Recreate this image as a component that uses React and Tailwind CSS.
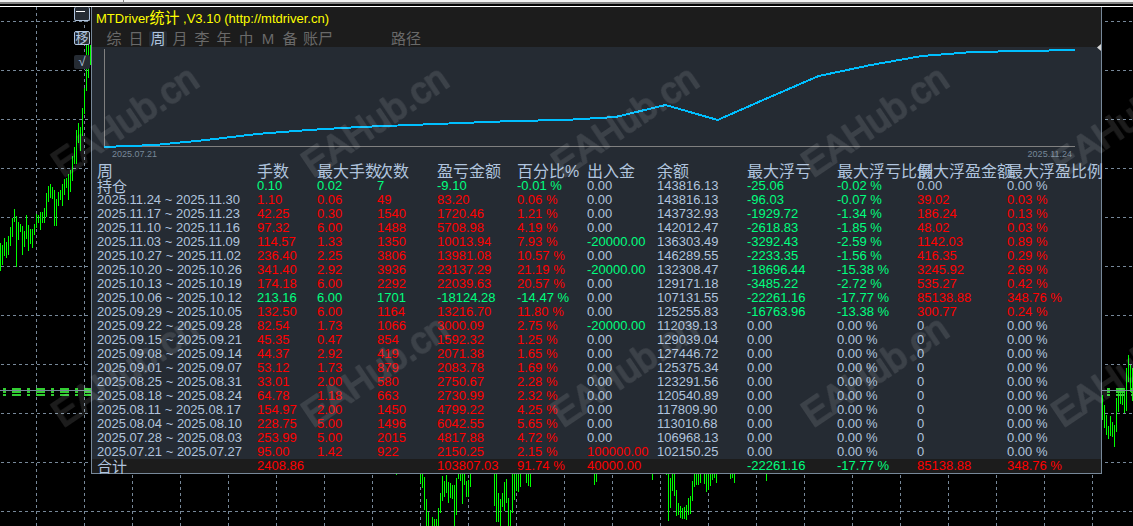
const TABS = ['综', '日', '周', '月', '李', '年', '巾', 'M', '备', '账尸']

const COLUMNS = [
  { label: '周',           width: 'w-[165px]' },
  { label: '手数',         width: 'w-[60px]' },
  { label: '最大手数',     width: 'w-[60px]' },
  { label: '次数',         width: 'w-[60px]' },
  { label: '盈亏金额',     width: 'w-[80px]' },
  { label: '百分比%',      width: 'w-[70px]' },
  { label: '出入金',       width: 'w-[70px]' },
  { label: '余额',         width: 'w-[90px]' },
  { label: '最大浮亏',     width: 'w-[90px]' },
  { label: '最大浮亏比例', width: 'w-[80px]' },
  { label: '最大浮盈金额', width: 'w-[90px]' },
  { label: '最大浮盈比例', width: '' },
]

// period, lots, max lots, trades, profit, %, deposit, balance, max loss, %, max gain, %
const ROWS = [
  ['持仓', '0.10', '0.02', '7', '-9.10', '-0.01 %', '0.00', '143816.13', '-25.06', '-0.02 %', '0.00', '0.00 %'],
  ['2025.11.24 ~ 2025.11.30', '1.10', '0.06', '49', '83.20', '0.06 %', '0.00', '143816.13', '-96.03', '-0.07 %', '39.02', '0.03 %'],
  ['2025.11.17 ~ 2025.11.23', '42.25', '0.30', '1540', '1720.46', '1.21 %', '0.00', '143732.93', '-1929.72', '-1.34 %', '186.24', '0.13 %'],
  ['2025.11.10 ~ 2025.11.16', '97.32', '6.00', '1488', '5708.98', '4.19 %', '0.00', '142012.47', '-2618.83', '-1.85 %', '48.02', '0.03 %'],
  ['2025.11.03 ~ 2025.11.09', '114.57', '1.33', '1350', '10013.94', '7.93 %', '-20000.00', '136303.49', '-3292.43', '-2.59 %', '1142.03', '0.89 %'],
  ['2025.10.27 ~ 2025.11.02', '236.40', '2.25', '3806', '13981.08', '10.57 %', '0.00', '146289.55', '-2233.35', '-1.56 %', '416.35', '0.29 %'],
  ['2025.10.20 ~ 2025.10.26', '341.40', '2.92', '3936', '23137.29', '21.19 %', '-20000.00', '132308.47', '-18696.44', '-15.38 %', '3245.92', '2.69 %'],
  ['2025.10.13 ~ 2025.10.19', '174.18', '6.00', '2292', '22039.63', '20.57 %', '0.00', '129171.18', '-3485.22', '-2.72 %', '535.27', '0.42 %'],
  ['2025.10.06 ~ 2025.10.12', '213.16', '6.00', '1701', '-18124.28', '-14.47 %', '0.00', '107131.55', '-22261.16', '-17.77 %', '85138.88', '348.76 %'],
  ['2025.09.29 ~ 2025.10.05', '132.50', '6.00', '1164', '13216.70', '11.80 %', '0.00', '125255.83', '-16763.96', '-13.38 %', '300.77', '0.24 %'],
  ['2025.09.22 ~ 2025.09.28', '82.54', '1.73', '1066', '3000.09', '2.75 %', '-20000.00', '112039.13', '0.00', '0.00 %', '0', '0.00 %'],
  ['2025.09.15 ~ 2025.09.21', '45.35', '0.47', '854', '1592.32', '1.25 %', '0.00', '129039.04', '0.00', '0.00 %', '0', '0.00 %'],
  ['2025.09.08 ~ 2025.09.14', '44.37', '2.92', '419', '2071.38', '1.65 %', '0.00', '127446.72', '0.00', '0.00 %', '0', '0.00 %'],
  ['2025.09.01 ~ 2025.09.07', '53.12', '1.73', '879', '2083.78', '1.69 %', '0.00', '125375.34', '0.00', '0.00 %', '0', '0.00 %'],
  ['2025.08.25 ~ 2025.08.31', '33.01', '2.00', '580', '2750.67', '2.28 %', '0.00', '123291.56', '0.00', '0.00 %', '0', '0.00 %'],
  ['2025.08.18 ~ 2025.08.24', '64.78', '1.18', '663', '2730.99', '2.32 %', '0.00', '120540.89', '0.00', '0.00 %', '0', '0.00 %'],
  ['2025.08.11 ~ 2025.08.17', '154.97', '2.00', '1450', '4799.22', '4.25 %', '0.00', '117809.90', '0.00', '0.00 %', '0', '0.00 %'],
  ['2025.08.04 ~ 2025.08.10', '228.75', '5.00', '1496', '6042.55', '5.65 %', '0.00', '113010.68', '0.00', '0.00 %', '0', '0.00 %'],
  ['2025.07.28 ~ 2025.08.03', '253.99', '5.00', '2015', '4817.88', '4.72 %', '0.00', '106968.13', '0.00', '0.00 %', '0', '0.00 %'],
  ['2025.07.21 ~ 2025.07.27', '95.00', '1.42', '922', '2150.25', '2.15 %', '100000.00', '102150.25', '0.00', '0.00 %', '0', '0.00 %'],
]

const TOTAL = ['合计', '2408.86', '', '', '103807.03', '91.74 %', '40000.00', '', '-22261.16', '-17.77 %', '85138.88', '348.76 %']

const EQUITY = '0,100 51,98 102,93 153,87 204,83 255,80 306,78 357,76 408,74 460,73 511,70 561,58 613,73 663,51 714,29 766,18 817,9 868,5 919,4 970,3'

// price bars of the chart behind the panel: x, high, low
const BARS = [
  [0, 243, 271], [2, 245, 265], [4, 238, 256], [6, 242, 258], [8, 236, 255], [10, 227, 246], [12, 218, 237],
  [14, 209, 222], [16, 216, 267], [18, 222, 240], [20, 224, 232], [22, 226, 255], [24, 231, 247], [26, 215, 239],
  [28, 225, 251], [30, 229, 244], [32, 229, 248], [34, 224, 235], [36, 214, 228], [38, 215, 223], [40, 212, 230],
  [42, 212, 223], [44, 208, 223], [46, 193, 217], [48, 186, 202], [50, 184, 198], [52, 187, 199], [54, 190, 226],
  [56, 199, 226], [58, 192, 206], [60, 190, 200], [62, 184, 206], [64, 179, 195], [66, 178, 188], [68, 174, 200],
  [70, 170, 192], [72, 156, 181], [74, 147, 164], [76, 130, 164], [78, 123, 143], [80, 127, 151], [82, 108, 136],
  [84, 88, 114], [86, 45, 91], [88, 45, 78], [90, 45, 65],
  [396, 473, 475], [412, 473, 474], [420, 473, 483], [422, 473, 488], [424, 477, 510], [426, 499, 526],
  [428, 512, 526], [432, 517, 526], [434, 519, 526], [436, 519, 526], [438, 508, 526], [440, 493, 513],
  [442, 476, 501], [444, 481, 497], [446, 475, 493], [448, 482, 503], [450, 483, 498], [452, 485, 499],
  [454, 485, 526], [456, 478, 515], [458, 473, 479], [460, 473, 481], [462, 473, 504], [464, 473, 485],
  [466, 481, 497], [468, 480, 497], [470, 473, 487],
  [494, 473, 506], [496, 473, 522], [498, 493, 522], [500, 499, 526], [502, 493, 507], [504, 482, 511],
  [506, 479, 503], [508, 498, 526], [510, 510, 526], [512, 473, 513], [514, 473, 500], [516, 473, 491],
  [518, 473, 492], [520, 473, 487], [526, 473, 483], [528, 473, 486], [530, 473, 487],
  [582, 473, 474], [594, 473, 485], [596, 473, 482], [650, 473, 474], [652, 473, 480],
  [666, 473, 475], [668, 473, 521], [670, 478, 508], [672, 473, 491], [674, 474, 496], [676, 490, 516],
  [678, 503, 515], [680, 506, 518], [682, 508, 519], [684, 507, 519], [686, 505, 520], [688, 498, 515],
  [690, 496, 514], [692, 481, 501], [694, 473, 487], [696, 473, 485], [698, 473, 485], [700, 473, 483],
  [704, 473, 484], [706, 473, 492], [708, 473, 490], [710, 473, 486], [712, 473, 480], [714, 473, 478],
  [716, 473, 483], [730, 473, 479], [732, 473, 478], [734, 473, 483], [766, 473, 481],
  [1102, 395, 420], [1104, 405, 428], [1106, 415, 435], [1108, 426, 439], [1110, 416, 436], [1112, 422, 437],
  [1114, 425, 447], [1116, 398, 432], [1118, 388, 412], [1120, 388, 404], [1122, 389, 405], [1124, 389, 413],
  [1126, 368, 411], [1128, 355, 382], [1130, 365, 392], [1132, 368, 401],
]

const BLUE = 'text-[#b0c4de]'
const RED = 'text-[#ff0000]'
const GREEN = 'text-[#00ff7f]'

function tone(row, i) {
  if (i === 0 || i === 7) return BLUE
  if (i < 6) return row[4].startsWith('-') ? GREEN : RED
  if (row[i].startsWith('-')) return GREEN
  return parseFloat(row[i]) === 0 ? BLUE : RED
}

function Cell({ row, i }) {
  const Tag = i === 0 ? 'th' : 'td'
  const cjk = i === 0 && !row[0].startsWith('2')
  return (
    <Tag
      scope={i === 0 ? 'row' : undefined}
      className={`p-0 text-left font-normal whitespace-nowrap ${i === 0 ? 'pl-[5px]' : ''} ${cjk ? 'text-[15px] leading-[13px]' : ''} ${tone(row, i)}`}
    >
      {row[i]}
    </Tag>
  )
}

function PriceChart() {
  const cols = Array.from({ length: 23 }, (_, i) => 36 + i * 48)
  const lines = Array.from({ length: 11 }, (_, i) => 21 + i * 49)
  const orders = [[3, 3], [12, 9], [27, 3], [36, 9], [51, 3], [60, 9], [75, 3], [84, 7], [1107, 3], [1116, 9], [1131, 2]]
  return (
    <svg className="absolute inset-0 w-full h-full" viewBox="0 0 1133 526" preserveAspectRatio="xMinYMin slice"
      shapeRendering="crispEdges" aria-hidden="true">
      <g stroke="#778899" strokeDasharray="3 3">
        {cols.map(x => <path key={x} d={`M${x}.5 7V526`} />)}
        {lines.map(y => <path key={y} d={`M1 ${y}.5H1133`} />)}
      </g>
      <g fill="#00ff00">
        {BARS.map(([x, y1, y2]) => <rect key={x} x={x} y={y1} width="1" height={y2 - y1} />)}
      </g>
      <g fill="#32cd32">
        {orders.map(([x, w]) => (
          <path key={x} d={`M${x} 388h${w}v2h-${w}zM${x} 391h${w}v2h-${w}zM${x} 394h${w}v2h-${w}z`} />
        ))}
      </g>
      <path d="M0 390.5H1133" stroke="#778899" />
    </svg>
  )
}

function Watermark() {
  return (
    <svg className="absolute inset-0 w-full h-full pointer-events-none" viewBox="0 0 1133 526"
      preserveAspectRatio="xMinYMin slice" aria-hidden="true">
      <g fill="#fff" stroke="#fff" strokeWidth="2" strokeLinejoin="round" opacity="0.11"
        fontFamily="Liberation Sans, sans-serif" fontSize="37">
        {[178, 428].map(y => [63, 313, 563, 813, 1063].map(x => (
          <text key={`${x}-${y}`} transform={`translate(${x} ${y}) rotate(-34)`}>EAHub.cn</text>
        )))}
      </g>
    </svg>
  )
}

export default function App() {
  return (
    <div className="relative min-h-screen overflow-hidden bg-black font-['Liberation_Sans','Noto_Sans_CJK_SC',sans-serif] text-[13px] leading-[14px]">
      <PriceChart />

      {/* Window frame */}
      <div className="relative h-[7px] bg-black border-b border-white">
        <div className="h-1 bg-[#f0f0f0] border-b-2 border-[#808080]">
          <div className="ml-[123px] w-px h-[2px] bg-[#808080]" />
        </div>
      </div>

      <div className="relative flex items-start">
        {/* Side buttons */}
        <div className="w-[91px] flex flex-col items-end gap-[10px] pr-px flex-shrink-0 text-[#b0c4de]">
          <button title="Minimize" className="w-4 h-[14px] flex items-start bg-[#252b33] border border-t-0 border-[#b0c4de] rounded-xs pt-1 pl-px">
            <span className="block w-[9px] h-px bg-white" />
          </button>
          <button title="Move" className="w-4 h-[14px] flex items-center justify-center overflow-hidden bg-[#252b33] border border-[#b0c4de] rounded-xs text-[13px]">移</button>
          <button title="Confirm" className="w-4 h-[14px] flex items-center justify-center bg-[#252b33] rounded-xs text-[13px]">√</button>
        </div>

        {/* Statistics panel */}
        <main className="relative flex-1 min-w-0 border-x border-b border-[#778899] bg-[#252b33]">
          <header className="h-10 bg-[#1c1c1c]">
            <h1 className="pl-1 pt-[3px] leading-4 text-[#ffff00] whitespace-nowrap">
              MTDriver<span className="text-[15px]">统计</span> ,V3.10 (http://mtdriver.cn)
            </h1>
            <nav className="flex pl-[13px] pt-1 text-[#696969] text-[15px] leading-4">
              {TABS.map(tab => (
                <button key={tab}
                  className={`min-w-[18px] mr-1 whitespace-nowrap rounded-xs ${tab === '周' ? 'bg-[#252b33] text-[#b0c4de]' : ''}`}>
                  {tab}
                </button>
              ))}
              <button className="ml-[54px] whitespace-nowrap">路径</button>
            </nav>
          </header>

          <svg className="absolute right-0 top-[37px] w-1 h-[7px]" viewBox="0 0 4 7" aria-hidden="true">
            <path d="M4 0L0 3.5L4 7z" fill="#d3d3d3" />
          </svg>

          {/* Equity curve */}
          <section className="h-[117px] pl-3 pr-[26px]">
            <svg className="block w-full h-[102px]" viewBox="0 0 970 102" preserveAspectRatio="none" shapeRendering="crispEdges">
              <path d="M0.5 2V99.5H970" fill="none" stroke="#808080" vectorEffect="non-scaling-stroke" />
              <polyline points={EQUITY} fill="none" stroke="#00bfff" strokeWidth="2" vectorEffect="non-scaling-stroke" />
            </svg>
            <div className="flex justify-between pl-2 pr-[3px] text-[9px] leading-[10px] text-[#778899]">
              <span>2025.07.21</span>
              <span>2025.11.24</span>
            </div>
          </section>

          <table className="w-full table-fixed border-collapse">
            <thead>
              <tr className="h-[15px]">
                {COLUMNS.map(({ label, width }, i) => (
                  <th key={label} scope="col"
                    className={`p-0 text-left font-normal whitespace-nowrap text-base leading-[15px] text-[#b0c4de] ${i === 0 ? 'pl-[5px]' : ''} ${width}`}>
                    {label}
                  </th>
                ))}
              </tr>
            </thead>
            <tbody>
              {ROWS.map(row => (
                <tr key={row[0]} className="h-[14px]">
                  {row.map((_, i) => <Cell key={i} row={row} i={i} />)}
                </tr>
              ))}
            </tbody>
            <tfoot>
              <tr className="h-[14px] bg-[#1c1c1c]">
                {TOTAL.map((_, i) => <Cell key={i} row={TOTAL} i={i} />)}
              </tr>
            </tfoot>
          </table>
        </main>
        <div className="w-[31px] flex-shrink-0" />
      </div>

      <Watermark />
    </div>
  )
}
